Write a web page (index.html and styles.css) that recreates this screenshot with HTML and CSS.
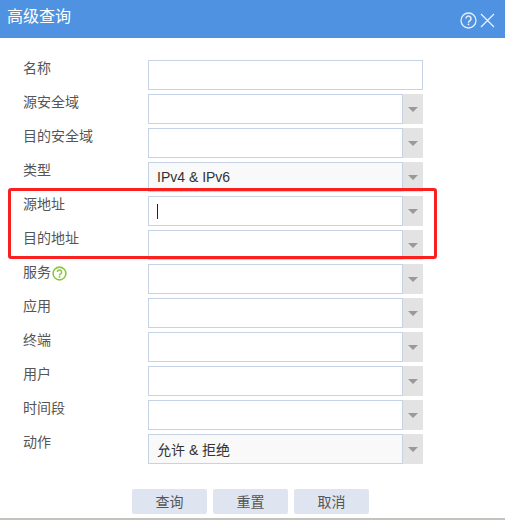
FILE: index.html
```html
<!DOCTYPE html>
<html lang="zh-CN">
<head>
<meta charset="utf-8">
<title>高级查询</title>
<link rel="stylesheet" href="styles.css">
</head>
<body>
<div class="dialog">
  <header class="head">
    <span class="title">高级查询</span>
    <div class="tools">
      <svg class="tool" width="17" height="17" viewBox="0 0 17 17"><circle cx="8.5" cy="8.5" r="7.5" fill="none" stroke="#e6effb" stroke-width="1.3"/><path d="M6 6.6a2.5 2.5 0 1 1 3.9 2.1c-.9.6-1.4 1-1.4 2" fill="none" stroke="#e6effb" stroke-width="1.5"/><rect x="7.7" y="11.6" width="1.6" height="1.6" fill="#e6effb"/></svg>
      <svg class="tool" width="15" height="15" viewBox="0 0 15 15"><path d="M1 1l13 13M14 1L1 14" fill="none" stroke="#eef4fc" stroke-width="1.2"/></svg>
    </div>
  </header>
  <form class="form">
    <div class="row"><span class="label">名称</span><div class="field"><div class="box"></div></div></div>
    <div class="row"><span class="label">源安全域</span><div class="field"><div class="box"></div><span class="arrow"></span></div></div>
    <div class="row"><span class="label">目的安全域</span><div class="field"><div class="box"></div><span class="arrow"></span></div></div>
    <div class="row"><span class="label">类型</span><div class="field"><div class="box filled">IPv4 &amp; IPv6</div><span class="arrow"></span></div></div>
    <div class="row"><span class="label">源地址</span><div class="field"><div class="box"><span class="caret"></span></div><span class="arrow"></span></div></div>
    <div class="row"><span class="label">目的地址</span><div class="field"><div class="box"></div><span class="arrow"></span></div></div>
    <div class="row"><span class="label">服务<svg class="hint" width="15" height="15" viewBox="0 0 15 15"><circle cx="7.5" cy="7.5" r="6.4" fill="none" stroke="#8cc63f" stroke-width="1.6"/><path d="M5.4 6a2.1 2.1 0 1 1 3.3 1.8c-.8.5-1.2.8-1.2 1.6" fill="none" stroke="#8cc63f" stroke-width="1.5"/><rect x="6.7" y="10.1" width="1.6" height="1.6" fill="#8cc63f"/></svg></span><div class="field"><div class="box"></div><span class="arrow"></span></div></div>
    <div class="row"><span class="label">应用</span><div class="field"><div class="box"></div><span class="arrow"></span></div></div>
    <div class="row"><span class="label">终端</span><div class="field"><div class="box"></div><span class="arrow"></span></div></div>
    <div class="row"><span class="label">用户</span><div class="field"><div class="box"></div><span class="arrow"></span></div></div>
    <div class="row"><span class="label">时间段</span><div class="field"><div class="box"></div><span class="arrow"></span></div></div>
    <div class="row"><span class="label">动作</span><div class="field"><div class="box filled">允许 &amp; 拒绝</div><span class="arrow"></span></div></div>
    <div class="actions">
      <button type="button" class="btn">查询</button>
      <button type="button" class="btn">重置</button>
      <button type="button" class="btn">取消</button>
    </div>
  </form>
  <div class="highlight"></div>
</div>
</body>
</html>
```

FILE: styles.css
```css
* { box-sizing: border-box; }
html, body { margin: 0; padding: 0; background: #fff; }
body {
  width: 505px;
  height: 520px;
  overflow: hidden;
  font-family: "Liberation Sans", "Noto Sans CJK SC", sans-serif;
  font-size: 14px;
  color: #555;
}
.dialog {
  position: relative;
  height: 520px;
  border-bottom: 2px solid #c4c4bf;
}
.head {
  height: 38px;
  background: #4f92e1;
  display: flex;
  align-items: center;
  justify-content: space-between;
  padding: 0 10px 0 7px;
  color: #fff;
}
.title { font-size: 16px; line-height: 36px; margin-top: -4px; }
.tools { display: flex; align-items: center; gap: 3px; margin-top: 2px; }
.tool { display: block; }
.form {
  padding: 22px 0 0 23px;
  display: flex;
  flex-direction: column;
  gap: 4px;
}
.row { display: flex; height: 30px; }
.label {
  width: 125px;
  line-height: 16px;
  display: flex;
  align-items: flex-start;
  gap: 1px;
}
.hint { margin-top: 2px; }
.field { width: 275px; display: flex; }
.box {
  flex: 1;
  border: 1px solid #c6d3e4;
  background: #fff;
  padding-left: 8px;
  display: flex;
  align-items: center;
  color: #333;
}
.box.filled { background: #f9f9f9; }
.caret { width: 1px; height: 15px; background: #222; }
.arrow {
  width: 20px;
  background: #e3e3e3;
  display: flex;
  align-items: center;
  justify-content: center;
}
.arrow::after {
  content: "";
  border-left: 5px solid transparent;
  border-right: 5px solid transparent;
  border-top: 5px solid #999;
}
.actions {
  margin: 21px 0 0 109px;
  display: flex;
  gap: 6px;
}
.btn {
  width: 75px;
  height: 25px;
  padding: 0 0 2px;
  border: 0;
  border-radius: 2px;
  background: #dfe5f0;
  color: #555;
  font: inherit;
}
.highlight {
  position: absolute;
  left: 8px;
  top: 188px;
  width: 429px;
  height: 71px;
  border: 3px solid #fb2020;
  border-radius: 3px;
  pointer-events: none;
}
```
